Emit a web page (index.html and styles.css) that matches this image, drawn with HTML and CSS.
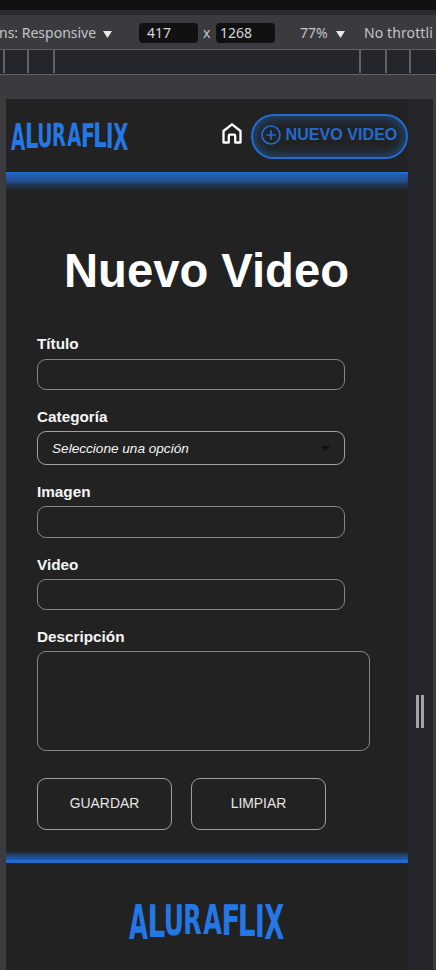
FILE: index.html
```html
<!DOCTYPE html>
<html lang="es">
<head>
<meta charset="utf-8">
<title>Aluraflix</title>
<link rel="stylesheet" href="styles.css">
</head>
<body>
<svg class="defs" width="0" height="0" aria-hidden="true">
  <symbol id="caret" viewBox="0 0 9 7" preserveAspectRatio="none"><path d="M0 0h9L4.5 7z"/></symbol>
</svg>
<div class="tabstrip"></div>
<div class="toolbar">
  <span class="device">ns: Responsive</span>
  <svg class="caret caret-device"><use href="#caret"/></svg>
  <span class="size">417</span>
  <span class="times">x</span>
  <span class="size size-height">1268</span>
  <span class="zoom">77%</span>
  <svg class="caret caret-zoom"><use href="#caret"/></svg>
  <span class="throttle">No throttli</span>
</div>
<div class="ruler"><i></i><i></i><i></i><i></i><i></i><i></i></div>
<div class="stage">
  <div class="page">
    <header class="header">
      <svg class="logo" viewBox="0 0 466 105" preserveAspectRatio="none">
        <g id="wordmark"><text transform="translate(0 105) scale(.735 1.44)">A</text><text transform="translate(55.3 98) scale(.84 1.344)">L</text><text transform="translate(104.1 92.5) scale(.748 1.27)">U</text><text transform="translate(163.4 90) scale(.72 1.235)">R</text><text transform="translate(223.6 90) scale(.722 1.235)">A</text><text transform="translate(278.4 92) scale(.824 1.262)">F</text><text transform="translate(327.3 95) scale(.84 1.303)">L</text><text transform="translate(378.6 98) scale(.8 1.344)">I</text><text transform="translate(406.8 105) scale(.783 1.44)">X</text></g>
      </svg>
      <nav class="nav">
        <svg class="home" viewBox="0 0 20 21"><path d="M1.5 8L10 1.3 18.5 8v11.5h-5.3v-6.8q0-1-1-1H7.8q-1 0-1 1v6.8H1.5z"/></svg>
        <a class="new-video">
          <svg class="plus" viewBox="0 0 20 20"><circle cx="10" cy="10" r="9"/><path d="M10 5.3v9.4M5.3 10h9.4"/></svg>
          <span>NUEVO VIDEO</span>
        </a>
      </nav>
    </header>
    <main class="main">
      <h1>Nuevo Video</h1>
      <form class="form">
        <label for="titulo">Título</label>
        <input id="titulo" class="box" type="text">
        <label>Categoría</label>
        <div class="box select"><span>Seleccione una opción</span><svg class="arrow"><use href="#caret"/></svg></div>
        <label for="imagen">Imagen</label>
        <input id="imagen" class="box box-imagen" type="text">
        <label class="label-video" for="video">Video</label>
        <input id="video" class="box" type="text">
        <label for="descripcion">Descripción</label>
        <textarea id="descripcion" class="box description"></textarea>
        <div class="actions"><button type="button">GUARDAR</button><button type="button">LIMPIAR</button></div>
      </form>
    </main>
    <footer class="footer">
      <svg class="logo logo-footer" viewBox="0 0 466 105" preserveAspectRatio="none"><use href="#wordmark"/></svg>
    </footer>
  </div>
  <div class="resizer"><i></i><i></i></div>
</div>
</body>
</html>
```
FILE: styles.css
```css
* { box-sizing: border-box; }

body {
  margin: 0;
  width: 436px;
  height: 970px;
  overflow: hidden;
  background: #3b3b3f;
  font-family: "Liberation Sans", sans-serif;
  color: #f5f5f5;
}

.defs { display: block; height: 0; }

.tabstrip { height: 15px; background: #111113; border-bottom: 5px solid #2a2a2f; }

.toolbar {
  display: flex;
  align-items: center;
  height: 34px;
  padding-top: 1px;
  font: 14px/20px "Noto Sans", sans-serif;
  color: #c2c3c6;
  white-space: nowrap;
}
.device { width: 98px; margin-left: -1px; }
.caret { width: 9px; height: 7px; fill: #e8e8e8; flex: none; margin-top: 3px; }
.caret-device { margin-left: 6px; }
.size {
  width: 59px;
  height: 20px;
  flex: none;
  margin-left: 27px;
  padding-left: 8px;
  border-radius: 4px;
  background: #111;
  color: #d6d6d8;
}
.times { width: 9px; margin-left: 5px; margin-top: 1px; }
.size-height { margin-left: 4px; padding-left: 4px; }
.zoom { width: 29px; margin-left: 25px; }
.caret-zoom { margin-left: 7px; }
.throttle { margin-left: 19px; letter-spacing: .1px; }
.device, .caret-device, .size, .times, .zoom, .caret-zoom, .throttle { flex: none; }

.ruler {
  display: flex;
  height: 26px;
  border-top: 1px solid #626266;
  border-bottom: 1px solid #626266;
  background: #25262b;
}
.ruler i { width: 2px; height: 23px; background: #626266; }
.ruler i:nth-child(1) { margin-left: 3px; }
.ruler i:nth-child(2) { margin-left: 22px; }
.ruler i:nth-child(3) { margin-left: 24px; }
.ruler i:nth-child(4) { margin-left: 304px; }
.ruler i:nth-child(5) { margin-left: 24px; }
.ruler i:nth-child(6) { margin-left: 22px; }

.stage { display: flex; height: 871px; margin: 24px 3px 0 6px; }
.page { width: 401.6px; flex: none; background: #222; overflow: hidden; }
.resizer {
  display: flex;
  flex: 1;
  gap: 2px;
  padding: 596px 0 0 8.4px;
  background: #25262b;
}
.resizer i { width: 3px; height: 33px; background: #a3a3a3; }

.header {
  display: flex;
  justify-content: space-between;
  height: 75px;
  padding-left: 5px;
  border-bottom: 2px solid #226bcf;
}
.logo { width: 117px; height: 27px; margin-top: 24px; fill: #2478e5; overflow: visible; }
#wordmark text { font: bold 100px "DejaVu Sans", sans-serif; text-rendering: geometricPrecision; }
.nav { display: flex; }
.home {
  width: 20px;
  height: 21px;
  margin: 24px 9px 0 0;
  fill: none;
  stroke: #fff;
  stroke-width: 2.3;
  stroke-linejoin: round;
}
.new-video {
  display: flex;
  align-items: center;
  width: 157px;
  height: 45px;
  margin-top: 15px;
  padding: 0 0 4px 8px;
  border: 2px solid #226bcf;
  border-radius: 23px;
  box-shadow: inset 0 0 13px rgba(34, 113, 209, .65);
  color: #226bcf;
  font-size: 16.1px;
  font-weight: bold;
  white-space: nowrap;
}
.plus { width: 20px; height: 20px; flex: none; margin-right: 5px; fill: none; stroke: #226bcf; stroke-width: 1.7; }

.main {
  height: 686px;
  padding: 72px 0 0 31px;
  background:
    linear-gradient(#2260b4, #225093 7px, #223550 11px, #222 17px) top / 100% 17px no-repeat,
    linear-gradient(to top, #225ba5, #224a80 4px, #222 9px) bottom / 100% 9px no-repeat;
}
h1 { width: 339px; margin: 0; font-size: 47.2px; line-height: 50px; text-align: center; color: #fff; }
.form { display: flex; flex-direction: column; align-items: flex-start; margin-top: 38.4px; }
label { height: 24.6px; font-size: 15.3px; font-weight: bold; line-height: 20px; }
.label-video { height: 24px; }
.box {
  display: block;
  width: 308px;
  height: 31px;
  margin: 0 0 16.6px;
  padding: 0 14px;
  border: 1px solid #858585;
  border-radius: 9px;
  background: transparent;
  color: #f5f5f5;
}
.select {
  display: flex;
  align-items: center;
  justify-content: space-between;
  height: 34px;
  border-color: #a0a0a0;
  font-size: 13.6px;
  font-style: italic;
}
.box-imagen { height: 32px; }
.arrow { width: 9px; height: 5px; fill: #111; }
.description { width: 333px; height: 100px; resize: none; margin-bottom: 27px; }
.actions { display: flex; gap: 19px; }
button {
  width: 135px;
  height: 52px;
  padding: 0 0 2px;
  border: 1px solid #a0a0a0;
  border-radius: 9px;
  background: transparent;
  color: #e5e5e5;
  font: 13.9px "Liberation Sans", sans-serif;
}

.footer {
  display: flex;
  justify-content: center;
  height: 110px;
  border-top: 3px solid #226bcf;
}
.logo-footer { width: 155px; height: 35px; margin-top: 41px; }
```
